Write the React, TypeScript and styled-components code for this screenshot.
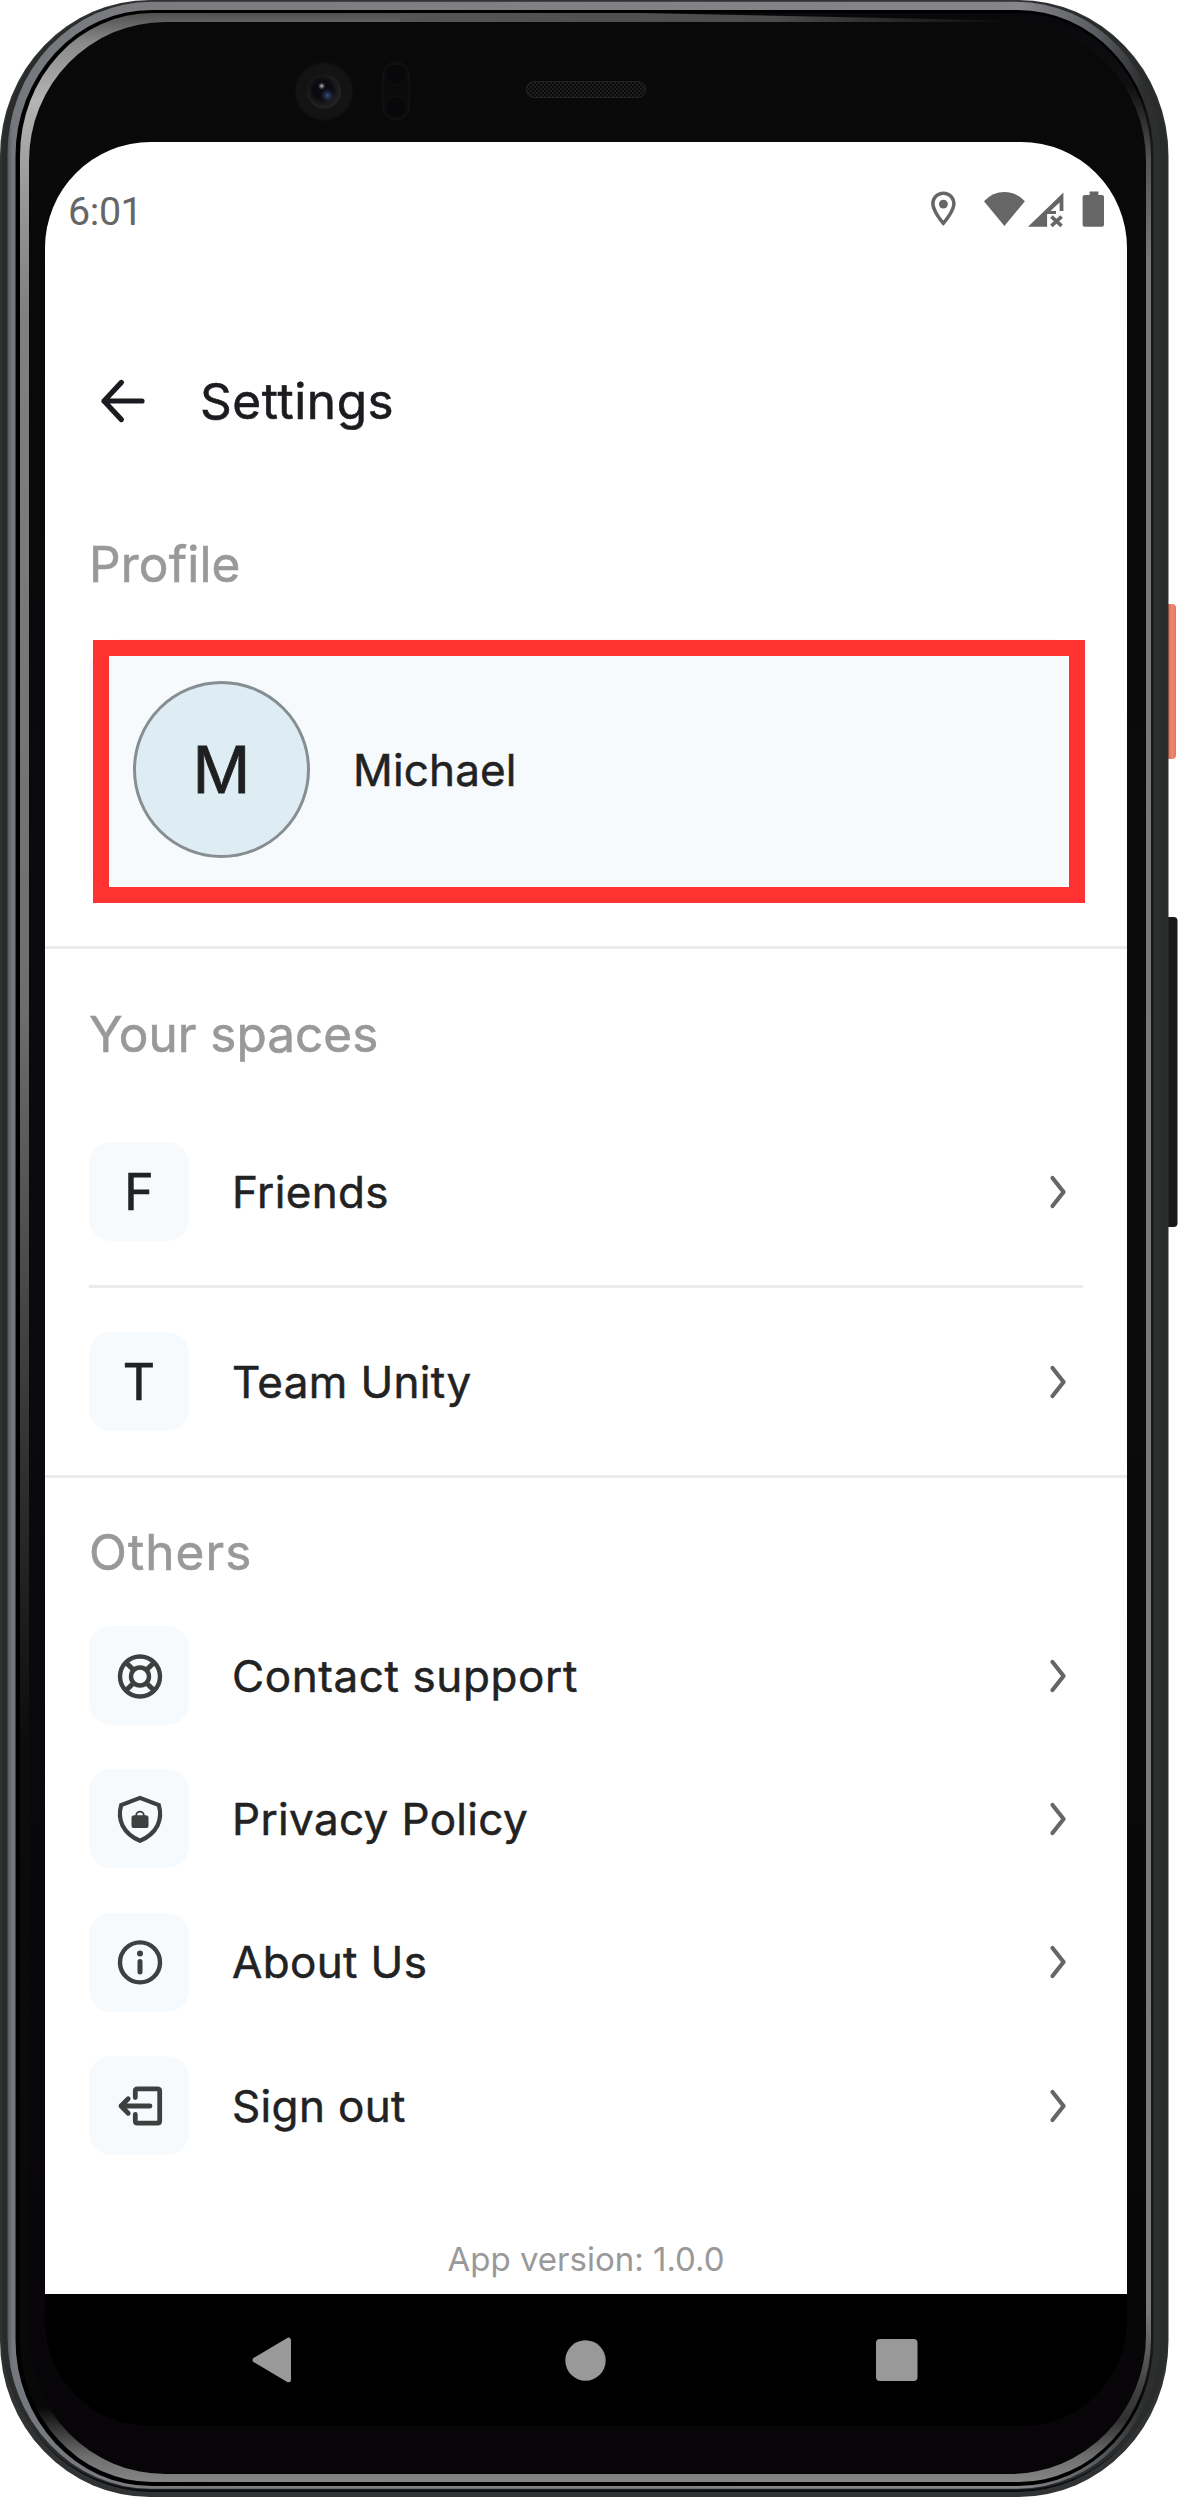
import React from "react";
import styled, { createGlobalStyle } from "styled-components";

const GlobalStyle = createGlobalStyle`
  *, *::before, *::after { box-sizing: border-box; }
  body { margin: 0; background: #fff; }
`;

const INTER = `Inter, "Liberation Sans", sans-serif`;

const Stage = styled.main`
  display: grid;
  width: 1178px;
  height: 2498px;
  overflow: hidden;
  font-family: ${INTER};
  color: #222;
`;

const FrameArt = styled.svg`
  grid-area: 1 / 1;
  display: block;
`;

const Screen = styled.div`
  grid-area: 1 / 1;
  z-index: 1;
  display: flex;
  flex-direction: column;
  width: 1082px;
  height: 2284px;
  margin: 142px 0 0 45px;
  border-radius: 106px;
  overflow: hidden;
  background: linear-gradient(#fff 2152px, #000 2152px);
`;

const StatusBar = styled.div`
  display: flex;
  align-items: center;
  justify-content: space-between;
  flex: none;
  height: 134px;
  padding: 0 22px 0 23px;
`;

const Clock = styled.time`
  font: 400 39.4px/46px Roboto, sans-serif;
  letter-spacing: -0.4px;
  color: #666;
  padding-top: 6px;
`;

const StatusIcons = styled.div`
  display: flex;
  align-items: center;
  color: #666;
`;

const Header = styled.header`
  display: flex;
  align-items: center;
  flex: none;
  height: 250px;
  padding-left: 54px;
  gap: 53px;
`;

const Title = styled.h1`
  margin: 0;
  font-size: 49.5px;
  line-height: 60px;
  font-weight: 400;
  letter-spacing: 0.6px;
  -webkit-text-stroke: 0.6px;
  color: #1c1c20;
`;

const Section = styled.section<{ $top: number; $line?: boolean }>`
  flex: none;
  padding: ${(p) => p.$top}px 44px 0;
  border-bottom: ${(p) => (p.$line ? "3px solid #ebebeb" : "0")};
`;

const SectionTitle = styled.h2<{ $gap: number; $tracking?: number }>`
  margin: 0 0 ${(p) => p.$gap}px;
  font-size: 49.5px;
  line-height: 60px;
  font-weight: 400;
  letter-spacing: ${(p) => p.$tracking ?? 0}px;
  -webkit-text-stroke: 0.6px;
  color: #999;
`;

const ProfileCard = styled.div`
  position: relative;
  display: flex;
  align-items: center;
  height: 261px;
  margin-bottom: 46px;
  padding-left: 44px;
  gap: 43px;
  border-radius: 33px;
  background: #f6fafd;
`;

const Highlight = styled.div`
  position: absolute;
  top: 1px;
  left: 4px;
  right: -2px;
  height: 263px;
  border: 16px solid #ff3131;
`;

const Avatar = styled.div`
  display: flex;
  align-items: center;
  justify-content: center;
  width: 177px;
  height: 177px;
  border: 3px solid #868e91;
  border-radius: 50%;
  background: #deecf4;
  font-size: 64px;
  -webkit-text-stroke: 0.9px;
  color: #1e201f;
`;

const Label = styled.span<{ $tracking?: number }>`
  flex: 1;
  font-size: 44px;
  line-height: 54px;
  letter-spacing: ${(p) => p.$tracking ?? 0.35}px;
  -webkit-text-stroke: 0.5px;
`;

const Row = styled.div<{ $height: number; $divided?: boolean }>`
  display: flex;
  align-items: center;
  gap: 43px;
  box-sizing: content-box;
  height: ${(p) => p.$height}px;
  padding-right: 15px;
  border-bottom: ${(p) => (p.$divided ? "3px solid #ebebeb" : "0")};
`;

const Tile = styled.div`
  display: flex;
  align-items: center;
  justify-content: center;
  width: 100px;
  height: 99px;
  border-radius: 22px;
  background: #f6fafd;
  font-size: 50px;
  -webkit-text-stroke: 0.6px;

  svg { margin-left: 1px; }
`;

const Footer = styled.footer`
  display: flex;
  flex: 1;
  align-items: flex-end;
  justify-content: center;
  padding-bottom: 15px;
  font-size: 33px;
  line-height: 40px;
  color: #999;
`;

const NavBar = styled.nav`
  display: flex;
  align-items: center;
  justify-content: space-between;
  flex: none;
  height: 132px;
  padding: 0 209px 0 207px;
  background: #000;
`;

const Chevron = () => (
  <svg width="20" height="36" viewBox="0 0 20 36" fill="none" stroke="#666" strokeWidth="4.2" strokeLinecap="round" strokeLinejoin="round">
    <path d="M4.5 4 L15.6 18 L4.5 32" />
  </svg>
);

const ink = { fill: "none", stroke: "#3d403f", strokeWidth: 4.4, strokeLinecap: "round", strokeLinejoin: "round" } as const;

const SupportIcon = () => (
  <svg width="60" height="60" viewBox="0 0 60 60" {...ink}>
    <circle cx="30" cy="30.5" r="20" />
    <circle cx="30" cy="30.5" r="9" />
    <path d="M15.9 16.4 L23.6 24.1 M44.1 16.4 L36.4 24.1 M15.9 44.6 L23.6 36.9 M44.1 44.6 L36.4 36.9" strokeLinecap="butt" strokeWidth="5" />
  </svg>
);

const ShieldIcon = () => (
  <svg width="60" height="60" viewBox="0 0 60 60" {...ink}>
    <path strokeLinejoin="miter" strokeWidth="4.2" d="M30 8.9 L48.8 16 Q52 27 47.5 36.5 Q42.5 46.5 30 51.8 Q17.5 46.5 12.5 36.5 Q8 27 11.2 16 Z" />
    <rect x="21.5" y="26.3" width="17" height="12.8" rx="2.6" fill="#3d403f" stroke="none" />
    <path strokeWidth="1.8" d="M26.2 27 V26.4 A3.8 3.8 0 0 1 33.8 26.4 V27" />
  </svg>
);

const InfoIcon = () => (
  <svg width="60" height="60" viewBox="0 0 60 60" {...ink}>
    <circle cx="30" cy="30.4" r="20" />
    <circle cx="30" cy="21.5" r="3" fill="#3d403f" stroke="none" />
    <path d="M30 29.4 V40" strokeWidth="5" />
  </svg>
);

const SignOutIcon = () => (
  <svg width="60" height="60" viewBox="0 0 60 60" {...ink} strokeWidth={4.8}>
    <path d="M25.3 21.6 V15 Q25.3 12.8 27.5 12.8 H47.5 Q49.7 12.8 49.7 15 V45 Q49.7 47.2 47.5 47.2 H27.5 Q25.3 47.2 25.3 45 V38.4" />
    <path d="M40 30 H11 M18.2 22.8 L11 30 L18.2 37.2" />
  </svg>
);

const BackArrow = () => (
  <svg width="48" height="48" viewBox="0 0 48 48" fill="none" stroke="#1c1c20" strokeWidth="5.2" strokeLinecap="round" strokeLinejoin="round">
    <path d="M43 24 H5 M22.4 5.4 L5 24 L22.4 42.6" />
  </svg>
);

/* Pin, Wi-Fi, no-data signal and battery glyphs of the system bar. */
const SystemIcons = () => (
  <svg width="174" height="42" viewBox="0 0 174 42" fill="currentColor">
    <g transform="translate(-8.6 0) scale(1.75 1.725)">
      <path d="M12 2C8.13 2 5 5.13 5 9c0 5.25 7 13 7 13s7-7.75 7-13c0-3.87-3.13-7-7-7zM7 9c0-2.76 2.24-5 5-5s5 2.24 5 5c0 2.88-2.88 7.19-5 9.88C9.92 16.21 7 11.85 7 9z" />
      <circle cx="12" cy="9.3" r="2.55" />
    </g>
    <path d="M73.4 38 L53 13.2 Q61.6 4 73.4 4 Q85.2 4 93.9 13.2 Z" />
    <path fillRule="evenodd" d="M97 38.8 L132.4 4.6 V23 H128.6 V14.5 L119.5 23 H125 V26 H116.1 V38.8 Z" />
    <path d="M120.4 28.6 L130.6 37.8 M130.6 28.6 L120.4 37.8" stroke="currentColor" strokeWidth="3.6" />
    <path d="M158.6 3.4 H167.4 V7 H171 Q173 7 173 9 V36.8 Q173 38.8 171 38.8 H153.6 Q151.6 38.8 151.6 36.8 V9 Q151.6 7 153.6 7 H158.6 Z" />
  </svg>
);

const NavBack = () => (
  <svg width="42" height="48" viewBox="0 0 42 48" fill="#999" stroke="#999" strokeWidth="5" strokeLinejoin="round">
    <path d="M3 24 L36.5 4.2 V43.8 Z" />
  </svg>
);
const NavHome = () => (
  <svg width="41" height="41" viewBox="0 0 41 41"><circle cx="20.5" cy="20.5" r="20.2" fill="#999" /></svg>
);
const NavRecent = () => (
  <svg width="42" height="42" viewBox="0 0 42 42"><rect width="41.5" height="42" rx="4" fill="#999" /></svg>
);

const PhoneFrame = () => (
  <FrameArt width="1178" height="2498" viewBox="0 0 1178 2498">
    <defs>
      <linearGradient id="rim" x1="0" x2="1">
        <stop offset="0" stopColor="#55595d" />
        <stop offset="0.004" stopColor="#74787d" />
        <stop offset="0.12" stopColor="#7c7c80" />
        <stop offset="0.88" stopColor="#85858a" />
        <stop offset="0.95" stopColor="#55585c" />
        <stop offset="0.985" stopColor="#2c2e30" />
        <stop offset="1" stopColor="#2c2e30" />
      </linearGradient>
      <linearGradient id="rimInner" x1="0" x2="1">
        <stop offset="0" stopColor="#000" />
        <stop offset="0.985" stopColor="#000" />
        <stop offset="1" stopColor="#191b1c" />
      </linearGradient>
      <linearGradient id="shineLeft" x1="0" y1="13" x2="0" y2="2482" gradientUnits="userSpaceOnUse">
        <stop offset="0" stopColor="#505050" />
        <stop offset="0.012" stopColor="#8a8a8a" />
        <stop offset="0.035" stopColor="#b4b4b4" />
        <stop offset="0.07" stopColor="#9a9a9a" />
        <stop offset="0.12" stopColor="#808080" />
        <stop offset="0.4" stopColor="#6e6e6e" />
        <stop offset="0.7" stopColor="#0c0c0c" />
        <stop offset="0.97" stopColor="#080808" />
        <stop offset="0.99" stopColor="#707070" />
        <stop offset="1" stopColor="#858585" />
      </linearGradient>
      <linearGradient id="shineRight" x1="0" y1="13" x2="0" y2="2482" gradientUnits="userSpaceOnUse">
        <stop offset="0" stopColor="#08080a" />
        <stop offset="0.03" stopColor="#101012" />
        <stop offset="0.06" stopColor="#555" />
        <stop offset="0.1" stopColor="#777" />
        <stop offset="0.93" stopColor="#7a7a7a" />
        <stop offset="0.96" stopColor="#444" />
        <stop offset="0.975" stopColor="#303030" />
        <stop offset="0.99" stopColor="#707070" />
        <stop offset="1" stopColor="#858585" />
      </linearGradient>
      <linearGradient id="topShine" x1="400" x2="1015" y1="0" y2="0" gradientUnits="userSpaceOnUse">
        <stop offset="0" stopColor="#555" />
        <stop offset="0.6" stopColor="#4c4c4c" />
        <stop offset="1" stopColor="#08080a" />
      </linearGradient>
      <linearGradient id="face" x1="0" y1="0" x2="0" y2="1">
        <stop offset="0" stopColor="#09090a" />
        <stop offset="0.5" stopColor="#0b0a0d" />
        <stop offset="1" stopColor="#070507" />
      </linearGradient>
      <linearGradient id="power" x1="0" x2="1">
        <stop offset="0" stopColor="#d96450" />
        <stop offset="0.55" stopColor="#e07058" />
        <stop offset="0.75" stopColor="#ee8a72" />
        <stop offset="1" stopColor="#f0705c" />
      </linearGradient>
      <radialGradient id="lens" cx="0.45" cy="0.45" r="0.55">
        <stop offset="0" stopColor="#0a0a12" />
        <stop offset="0.5" stopColor="#0a0a10" />
        <stop offset="0.75" stopColor="#191919" />
        <stop offset="1" stopColor="#242424" />
      </radialGradient>
      <radialGradient id="flare">
        <stop offset="0" stopColor="#3e5084" />
        <stop offset="1" stopColor="#1a2036" stopOpacity="0" />
      </radialGradient>
      <radialGradient id="glint">
        <stop offset="0" stopColor="#d0d0d0" />
        <stop offset="1" stopColor="#444" stopOpacity="0" />
      </radialGradient>
      <radialGradient id="housing">
        <stop offset="0" stopColor="#151515" />
        <stop offset="0.9" stopColor="#131313" />
        <stop offset="1" stopColor="#0a0a0a" />
      </radialGradient>
      <pattern id="mesh" width="4" height="4" patternUnits="userSpaceOnUse">
        <rect width="4" height="4" fill="#0b0b0b" />
        <circle cx="1" cy="1" r="0.8" fill="#343434" />
        <circle cx="3" cy="3" r="0.8" fill="#343434" />
      </pattern>
      <clipPath id="leftHalf"><rect width="600" height="2498" /></clipPath>
      <clipPath id="rightHalf"><rect x="600" width="578" height="2498" /></clipPath>
    </defs>

    <rect x="1160" y="604" width="16" height="155" rx="4" fill="url(#power)" />
    <rect x="1160" y="917" width="17.5" height="310" rx="4" fill="#181919" />

    <rect width="1168.5" height="2497" rx="150" ry="156" fill="#303233" />
    <rect x="4" y="2" width="1161" height="2490" rx="148" ry="154" fill="#0c0d0e" />
    <rect x="2" y="1.5" width="1165.5" height="2488" rx="148" ry="154" fill="#2a2c2c" />
    <rect x="7.5" y="1.8" width="1153" height="2487" rx="144" ry="152" fill="url(#rim)" />
    <rect x="15.5" y="10" width="1138" height="2476" rx="136" ry="146" fill="url(#rimInner)" />
    <rect x="20" y="13" width="1131" height="2469" rx="132" ry="143" fill="url(#shineLeft)" clipPath="url(#leftHalf)" />
    <rect x="20" y="13" width="1131" height="2469" rx="132" ry="143" fill="url(#shineRight)" clipPath="url(#rightHalf)" />
    <path d="M400 13 H640 L1010 20.5 V22.5 H400 Z" fill="url(#topShine)" />
    <rect x="29" y="22" width="1117" height="2452" rx="136" ry="139" fill="url(#face)" />

    <circle cx="324" cy="91.5" r="30" fill="url(#housing)" />
    <circle cx="324" cy="91.5" r="17" fill="url(#lens)" />
    <circle cx="327.5" cy="95.5" r="7.5" fill="url(#flare)" />
    <circle cx="321.7" cy="86" r="4" fill="url(#glint)" />
    <rect x="383" y="62.5" width="26" height="57" rx="13" fill="#0b0b0c" stroke="#121213" strokeWidth="1.4" />
    <circle cx="396" cy="74.5" r="10.5" fill="#08080a" stroke="#111112" />
    <circle cx="396" cy="107" r="10.5" fill="#08080a" stroke="#111112" />
    <rect x="526.5" y="81.5" width="119" height="16" rx="7.5" fill="url(#mesh)" stroke="#232323" />
  </FrameArt>
);

const spaces = ["Friends", "Team Unity"];
const others = [
  { label: "Contact support", Icon: SupportIcon, tracking: 0.6 },
  { label: "Privacy Policy", Icon: ShieldIcon },
  { label: "About Us", Icon: InfoIcon },
  { label: "Sign out", Icon: SignOutIcon },
];

export default function App() {
  return (
    <Stage>
      <GlobalStyle />
      <PhoneFrame />
      <Screen>
        <StatusBar>
          <Clock>6:01</Clock>
          <StatusIcons><SystemIcons /></StatusIcons>
        </StatusBar>

        <Header>
          <BackArrow />
          <Title>Settings</Title>
        </Header>

        <Section $top={8} $line>
          <SectionTitle $gap={45} $tracking={0.2}>Profile</SectionTitle>
          <ProfileCard>
            <Avatar>M</Avatar>
            <Label $tracking={0.15}>Michael</Label>
            <Highlight />
          </ProfileCard>
        </Section>

        <Section $top={55} $line>
          <SectionTitle $gap={34}>Your spaces</SectionTitle>
          {spaces.map((name, i) => (
            <Row key={name} $height={187} $divided={i < spaces.length - 1}>
              <Tile>{name[0]}</Tile>
              <Label>{name}</Label>
              <Chevron />
            </Row>
          ))}
        </Section>

        <Section $top={44}>
          <SectionTitle $gap={22} $tracking={1.1}>Others</SectionTitle>
          {others.map(({ label, Icon, tracking }) => (
            <Row key={label} $height={143.3}>
              <Tile><Icon /></Tile>
              <Label $tracking={tracking}>{label}</Label>
              <Chevron />
            </Row>
          ))}
        </Section>

        <Footer>App version: 1.0.0</Footer>

        <NavBar>
          <NavBack />
          <NavHome />
          <NavRecent />
        </NavBar>
      </Screen>
    </Stage>
  );
}
